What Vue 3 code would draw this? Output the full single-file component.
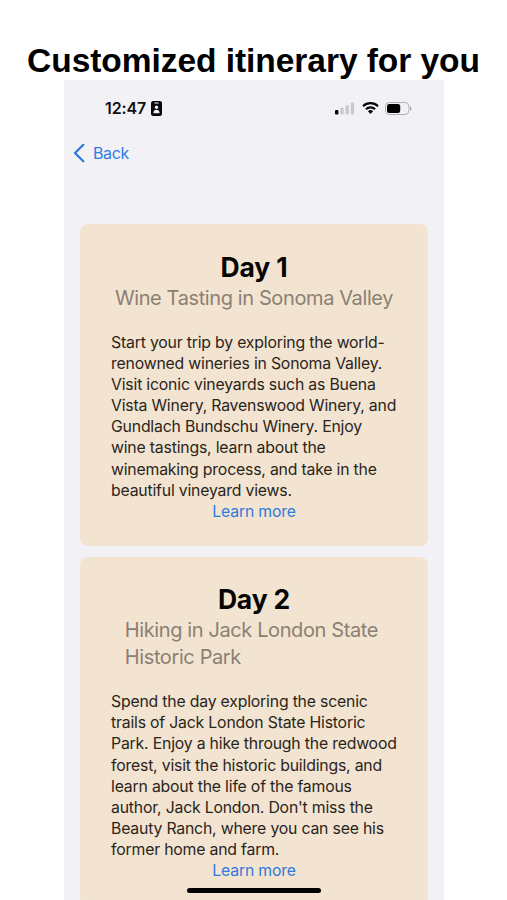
<script setup>
const days = [
  {
    title: 'Day 1',
    subtitle: ['Wine Tasting in Sonoma Valley'],
    body: [
      'Start your trip by exploring the world-',
      'renowned wineries in Sonoma Valley.',
      'Visit iconic vineyards such as Buena',
      'Vista Winery, Ravenswood Winery, and',
      'Gundlach Bundschu Winery. Enjoy',
      'wine tastings, learn about the',
      'winemaking process, and take in the',
      'beautiful vineyard views.',
    ],
  },
  {
    title: 'Day 2',
    subtitle: ['Hiking in Jack London State ', 'Historic Park'],
    body: [
      'Spend the day exploring the scenic',
      'trails of Jack London State Historic',
      'Park. Enjoy a hike through the redwood',
      'forest, visit the historic buildings, and',
      'learn about the life of the famous',
      "author, Jack London. Don't miss the",
      'Beauty Ranch, where you can see his',
      'former home and farm.',
    ],
  },
]
</script>

<template>
  <main class="page">
    <h1 class="headline">Customized itinerary for you</h1>
    <section class="phone">
      <header class="status">
        <span class="time">12:47</span>
        <svg class="badge" width="11" height="15" viewBox="0 0 11 15">
          <rect width="11" height="15" rx="2.2" fill="#08080a" />
          <rect x="3.2" y="1.5" width="4.6" height="1" rx=".5" fill="#f2f1f6" />
          <circle cx="5.5" cy="6.2" r="1.7" fill="#f2f1f6" />
          <path d="M2.4 12.2c0-2.4 1.3-3.5 3.1-3.5s3.1 1.1 3.1 3.5z" fill="#f2f1f6" />
        </svg>
        <svg class="signal" width="20" height="13" viewBox="0 0 20 13">
          <rect x="0" y="8" width="3.4" height="4.5" rx="1" fill="#08080a" />
          <rect x="5.4" y="5.8" width="3.2" height="6.7" rx="1" fill="#c9c8cc" />
          <rect x="10.6" y="3.2" width="3.2" height="9.3" rx="1" fill="#c9c8cc" />
          <rect x="15.8" y="0.5" width="3.2" height="12" rx="1" fill="#c9c8cc" />
        </svg>
        <svg class="wifi" width="17" height="12" viewBox="0 0 17 12">
          <g fill="none" stroke="#08080a" stroke-width="2.1">
            <path d="M1 4.2a10.8 10.8 0 0 1 15 0" />
            <path d="M3.9 7.2a6.6 6.6 0 0 1 9.2 0" />
          </g>
          <path d="M8.5 11.9L5.9 9.3a3.8 3.8 0 0 1 5.2 0z" fill="#08080a" />
        </svg>
        <svg class="battery" width="27" height="13" viewBox="0 0 27 13">
          <rect x=".5" y=".5" width="23.4" height="12" rx="3.8" fill="none" stroke="#b0afb3" />
          <rect x="2" y="2" width="13.2" height="9" rx="2.3" fill="#000" />
          <path d="M25 4.3c1.9.7 1.9 3.7 0 4.4z" fill="#a5a4a8" />
        </svg>
      </header>

      <nav class="nav">
        <svg width="12" height="20" viewBox="0 0 12 20">
          <path d="M10.3 1.8L2 10l8.3 8.2" fill="none" stroke="#2878dc" stroke-width="2.2" stroke-linecap="round" stroke-linejoin="round" />
        </svg>
        <a class="back">Back</a>
      </nav>

      <div class="cards">
        <article v-for="day in days" :key="day.title" class="card">
          <h2 class="day">{{ day.title }}</h2>
          <h3 class="subtitle">
            <span v-for="line in day.subtitle" :key="line" class="line">{{ line }}</span>
          </h3>
          <p class="body">
            <span v-for="line in day.body" :key="line" class="line">{{ line }}</span>
          </p>
          <a class="more">Learn more</a>
        </article>
      </div>
      <div class="home-bar"></div>
    </section>
  </main>
</template>

<style>
body {
  margin: 0;
  background: #fff;
}
</style>

<style scoped>
.page {
  width: 507px;
  height: 900px;
  overflow: hidden;
  background: #fff;
  font-family: Inter, "Liberation Sans", sans-serif;
}
.headline {
  margin: 0;
  height: 80px;
  box-sizing: border-box;
  padding-top: 41px;
  font: 700 33.5px/39px "Liberation Sans", Arial, sans-serif;
  letter-spacing: -0.05px;
  text-align: center;
  white-space: nowrap;
  color: #000;
}
.phone {
  position: relative;
  width: 380px;
  height: 820px;
  margin-left: 64px;
  overflow: hidden;
  background: #f2f1f6;
}
.status {
  display: flex;
  align-items: center;
  height: 56px;
  padding: 0 32px 0 41px;
}
.time {
  width: 42px;
  font-size: 16px;
  font-weight: 600;
  letter-spacing: -0.1px;
  white-space: nowrap;
  color: #111114;
}
.badge {
  margin-left: 4px;
}
.signal {
  margin-left: auto;
}
.wifi {
  margin-left: 7px;
}
.battery {
  margin-left: 6px;
}
.nav {
  display: flex;
  align-items: center;
  gap: 8px;
  height: 34px;
  padding-left: 9px;
}
.back {
  font-size: 16px;
  letter-spacing: -0.4px;
  color: #2f7ce4;
}
.cards {
  display: flex;
  flex-direction: column;
  gap: 11px;
  padding: 54px 16px 0;
}
.card {
  display: flex;
  flex-direction: column;
  align-items: center;
  padding: 24.5px 31px 23.4px;
  border-radius: 8px;
  background: #f2e4d0;
}
.day {
  margin: 0;
  font-size: 26.5px;
  font-weight: 700;
  line-height: 36px;
  letter-spacing: -0.15px;
  color: #080604;
}
.subtitle {
  margin: 0 0 20.6px;
  font-size: 20px;
  font-weight: 400;
  line-height: 26.6px;
  letter-spacing: -0.39px;
  color: #8b8074;
}
.line {
  display: block;
  white-space: pre;
}
.body {
  align-self: stretch;
  margin: 0;
  font-size: 15.8px;
  line-height: 21.15px;
  letter-spacing: -0.19px;
  color: #2b241c;
}
.more {
  font-size: 15.8px;
  line-height: 21.5px;
  letter-spacing: -0.2px;
  color: #2f7bdc;
}
.home-bar {
  position: absolute;
  left: 123px;
  bottom: 7.5px;
  width: 134px;
  height: 5px;
  border-radius: 3px;
  background: #000;
}
</style>
